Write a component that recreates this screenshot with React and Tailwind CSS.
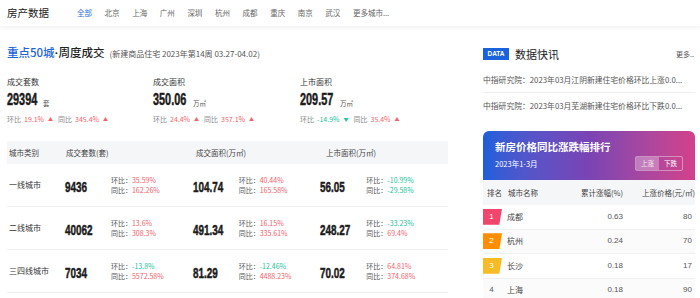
import React from "react";

const CJK = "font-['Noto_Sans_CJK_SC','Noto_Sans',sans-serif]";
const NUM = "font-['Liberation_Sans',sans-serif] font-bold [-webkit-text-stroke:0.5px_#1b1b1b]";

const nav = ["全部", "北京", "上海", "广州", "深圳", "杭州", "成都", "重庆", "南京", "武汉", "更多城市..."];

const RED = "text-[#f0646c]";
const GREEN = "text-[#22c29b]";

function Num({ children, w, size }) {
  return (
    <span className={`inline-block ${w} whitespace-nowrap overflow-visible`}>
      <span className={`inline-block origin-left scale-x-[0.64] ${NUM} ${size} text-[#1b1b1b] leading-none`}>{children}</span>
    </span>
  );
}

const stats = [
  { label: "成交套数", value: "29394", w: "w-[35px]", unit: "套", hb: "19.1%", hbUp: true, tb: "345.4%", tbUp: true },
  { label: "成交面积", value: "350.06", w: "w-[39px]", unit: "万㎡", hb: "24.4%", hbUp: true, tb: "357.1%", tbUp: true },
  { label: "上市面积", value: "209.57", w: "w-[39px]", unit: "万㎡", hb: "-14.9%", hbUp: false, tb: "35.4%", tbUp: true },
];

const rows = [
  {
    name: "一线城市",
    cells: [
      { v: "9436", hb: "35.59%", tb: "162.26%" },
      { v: "104.74", hb: "40.44%", tb: "165.58%" },
      { v: "56.05", hb: "-10.99%", tb: "-29.58%" },
    ],
  },
  {
    name: "二线城市",
    cells: [
      { v: "40062", hb: "13.6%", tb: "308.3%" },
      { v: "491.34", hb: "16.15%", tb: "335.61%" },
      { v: "248.27", hb: "-33.23%", tb: "69.4%" },
    ],
  },
  {
    name: "三四线城市",
    cells: [
      { v: "7034", hb: "-13.8%", tb: "5572.58%" },
      { v: "81.29", hb: "-12.46%", tb: "4488.23%" },
      { v: "70.02", hb: "64.81%", tb: "374.68%" },
    ],
  },
];

const ranks = [
  { r: "1", city: "成都", a: "0.63", p: "80", bg: "bg-[#f1456c]" },
  { r: "2", city: "杭州", a: "0.24", p: "70", bg: "bg-[#ff8d00]" },
  { r: "3", city: "长沙", a: "0.18", p: "17", bg: "bg-[#f7bb26]" },
  { r: "4", city: "上海", a: "0.18", p: "90", bg: "" },
];

function pc(v) {
  return v.startsWith("-") ? GREEN : RED;
}

export default function App() {
  return (
    <div className={`w-[700px] h-[298px] overflow-hidden bg-white ${CJK} text-[#333]`}>
      {/* header */}
      <div className="h-[26px] flex items-center pl-[7px] bg-white shadow-[0_2px_5px_rgba(0,0,0,0.06)] relative">
        <div className="text-[10.5px] text-[#222] w-[70px]">房产数据</div>
        <div className="flex gap-[12.6px] text-[7.5px] text-[#666]">
          {nav.map((n, i) => (
            <span key={n} className={i === 0 ? "text-[#1f6fe3]" : ""}>{n}</span>
          ))}
        </div>
      </div>

      <div className="flex">
        {/* left */}
        <div className="w-[441px] ml-[7px] pt-[18px]">
          <div className="flex items-baseline h-[16px] whitespace-nowrap">
            <span className="text-[11.5px] font-medium text-[#2163d8]">重点50城</span>
            <span className="text-[11.5px] font-bold text-[#222] font-['Liberation_Sans',sans-serif]">·</span>
            <span className="text-[11.5px] font-medium text-[#222]">周度成交</span>
            <span className="text-[8px] text-[#555] ml-[5px]">(新建商品住宅 2023年第14周 03.27-04.02)</span>
          </div>

          <div className="flex mt-[16px]">
            {stats.map((s, i) => (
              <div key={s.label} className={i === 0 ? "w-[146px]" : "w-[147px]"}>
                <div className="text-[8px] leading-[11px] text-[#333]">{s.label}</div>
                <div className="flex items-end h-[18px] mt-[5px]">
                  <Num w={s.w} size="text-[17px]">{s.value}</Num>
                  <span className="text-[6.5px] text-[#555] ml-[1px] mb-[1px]">{s.unit}</span>
                </div>
                <div className="flex items-center text-[7px] leading-[10px] mt-[4px] text-[#888]">
                  <span>环比</span>
                  <span className={`ml-[3px] ${pc(s.hb)}`}>{s.hb}</span>
                  <span className={`ml-[4px] text-[5px] ${s.hbUp ? RED : GREEN}`}>{s.hbUp ? "▲" : "▼"}</span>
                  <span className="ml-[5px]">同比</span>
                  <span className={`ml-[3px] ${pc(s.tb)}`}>{s.tb}</span>
                  <span className={`ml-[4px] text-[5px] ${s.tbUp ? RED : GREEN}`}>{s.tbUp ? "▲" : "▼"}</span>
                </div>
              </div>
            ))}
          </div>

          {/* table */}
          <div className="mt-[17px]">
            <div className="h-[23px] bg-[#f5f6f8] flex items-center text-[7.5px] text-[#444]">
              <div className="w-[59px] pl-[2px]">城市类别</div>
              <div className="w-[130px]">成交套数(套)</div>
              <div className="w-[130px]">成交面积(万㎡)</div>
              <div>上市面积(万㎡)</div>
            </div>
            {rows.map((r) => (
              <div key={r.name} className="h-[43px] flex items-center border-b border-[#eeeeee]">
                <div className="w-[59px] pl-[2px] text-[8px] text-[#333]">{r.name}</div>
                {r.cells.map((c, j) => (
                  <div key={j} className="w-[130px] flex items-center">
                    <Num w="w-[46px]" size="text-[15.5px]">{c.v}</Num>
                    <div className="text-[7px] leading-[10px] text-[#555]">
                      <div>环比：<span className={pc(c.hb)}>{c.hb}</span></div>
                      <div>同比：<span className={pc(c.tb)}>{c.tb}</span></div>
                    </div>
                  </div>
                ))}
              </div>
            ))}
          </div>
        </div>

        {/* right */}
        <div className="w-[212px] ml-[35px] pt-[20px]">
          <div className="h-[16px] flex items-center justify-between">
            <div className="flex items-center">
              <span className="w-[26px] h-[12px] bg-[#1a63dc] text-white text-[6.5px] font-bold flex items-center justify-center font-['Liberation_Sans',sans-serif]">DATA</span>
              <span className="ml-[6px] text-[11px] text-[#222]">数据快讯</span>
            </div>
            <span className="text-[7px] text-[#555] mr-[1px]">更多..</span>
          </div>
          <div className="mt-[5px]">
            <div className="h-[26px] flex items-center border-b border-[#eeeeee] text-[7.8px] text-[#555] whitespace-nowrap overflow-hidden">
              <span className="truncate">中指研究院：2023年03月江阴新建住宅价格环比上涨0.0...</span>
            </div>
            <div className="h-[26px] flex items-center text-[7.8px] text-[#555] whitespace-nowrap overflow-hidden">
              <span className="truncate">中指研究院：2023年03月芜湖新建住宅价格环比下跌0.0...</span>
            </div>
          </div>

          <div className="mt-[12px] h-[49px] rounded-t-[6px] bg-gradient-to-r from-[#1a5fda] via-[#7a43b4] to-[#d3408a] px-[12px] pt-[9px] text-white">
            <div className="text-[10.5px] font-bold leading-[14px]">新房价格同比涨跌幅排行</div>
            <div className="flex items-center justify-between mt-[3px]">
              <span className="text-[7.5px]">2023年1-3月</span>
              <div className="flex border border-white/40 rounded-[2px] text-[6.5px] h-[15px] -mt-[1px]">
                <span className="w-[23px] flex items-center justify-center bg-white/30 text-white/80">上涨</span>
                <span className="w-[23px] flex items-center justify-center">下跌</span>
              </div>
            </div>
          </div>

          <div className="h-[25px] bg-[#f5f6f8] flex items-center text-[7.5px] text-[#444]">
            <div className="w-[24px] pl-[4px]">排名</div>
            <div className="w-[60px] pl-[1px]">城市名称</div>
            <div className="w-[56px] text-right">累计涨幅(%)</div>
            <div className="w-[72px] text-right">上涨价格(元/㎡)</div>
          </div>
          {ranks.map((k, i) => (
            <div key={k.r} className={`h-[24.5px] flex items-center text-[8px] text-[#444] border-b border-[#f0f0f0] ${i % 2 === 1 ? "bg-[#fbfbfb]" : ""}`}>
              <div className="w-[24px]">
                {k.bg ? (
                  <div className={`w-[19px] h-[16px] ${k.bg} text-white flex items-center justify-center pr-[2px] [clip-path:polygon(0_0,100%_0,86%_100%,0_100%)] font-['Liberation_Sans',sans-serif]`}>{k.r}</div>
                ) : (
                  <div className="w-[19px] h-[16px] text-[#555] flex items-center justify-center pr-[2px] font-['Liberation_Sans',sans-serif]">{k.r}</div>
                )}
              </div>
              <div className="w-[60px]">{k.city}</div>
              <div className="w-[56px] text-right font-['Liberation_Sans',sans-serif] text-[#555]">{k.a}</div>
              <div className="w-[69px] text-right font-['Liberation_Sans',sans-serif] text-[#555]">{k.p}</div>
            </div>
          ))}
        </div>
      </div>
    </div>
  );
}
